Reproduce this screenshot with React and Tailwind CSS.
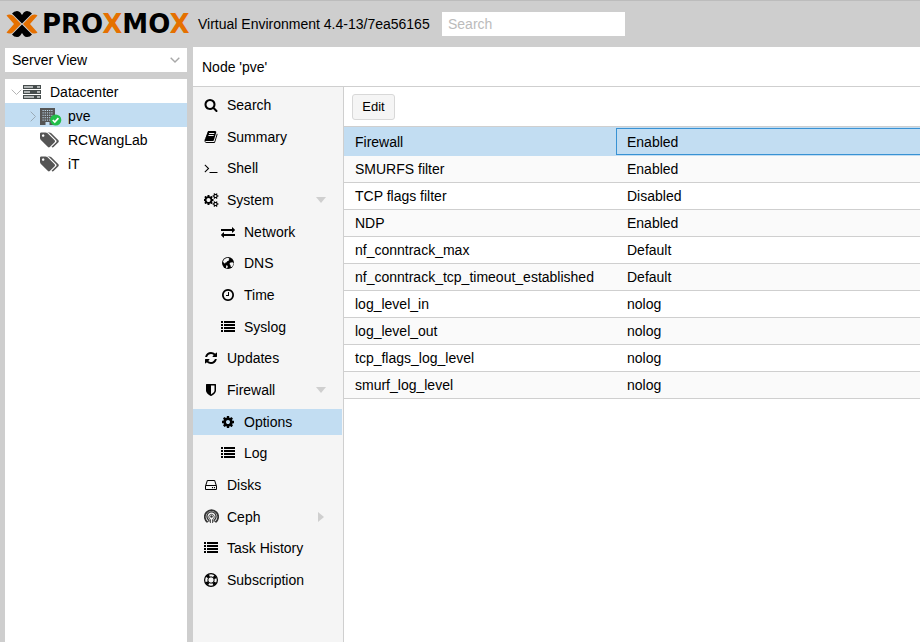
import React from "react";

const I = {
  search: ["0 0 1792 1792", "M1216 832q0-185-131.5-316.5t-316.5-131.5-316.5 131.5-131.5 316.5 131.5 316.5 316.5 131.5 316.5-131.5 131.5-316.5zm512 832q0 52-38 90t-90 38q-54 0-90-38l-343-342q-179 124-399 124-143 0-273.5-55.5t-225-150-150-225-55.5-273.5 55.5-273.5 150-225 225-150 273.5-55.5 273.5 55.5 225 150 150 225 55.5 273.5q0 220-124 399l343 343q37 37 37 90z"],
  book: ["0 0 1792 1792", "M1703 478q40 57 18 129l-275 906q-19 64-76.5 107.5t-122.5 43.5h-923q-77 0-148.5-53.5t-99.5-131.5q-24-67-2-127 0-4 3-27t4-37q1-8-3-21.5t-3-19.5q2-11 8-21t16.5-23.5 16.5-23.5q23-38 45-91.5t30-91.5q3-10 .5-30t-.5-28q3-11 17-28t17-23q21-36 42-92t25-90q1-9-2.5-32t.5-28q4-13 22-30.5t22-22.5q19-26 42.5-84.5t27.5-96.5q1-8-3-25.5t-2-26.5q2-8 9-18t18-23 17-21q8-12 16.5-30.5t15-35 16-36 19.5-32 26.5-23.5 36-11.5 47.5 5.5l-1 3q38-9 51-9h761q74 0 114 56t18 130l-274 906q-36 119-71.5 153.5t-128.5 34.5h-869q-27 0-38 15-11 16-1 43 24 70 144 70h923q29 0 56-15.5t35-41.5l300-987q7-22 5-57 38 15 59 43zm-1064 2q-4 13 2 22.5t20 9.5h608q13 0 25.5-9.5t16.5-22.5l21-64q4-13-2-22.5t-20-9.5h-608q-13 0-25.5 9.5t-16.5 22.5zm-83 256q-4 13 2 22.5t20 9.5h608q13 0 25.5-9.5t16.5-22.5l21-64q4-13-2-22.5t-20-9.5h-608q-13 0-25.5 9.5t-16.5 22.5z"],
  terminal: ["0 0 1792 1792", "M649 983l-466 466q-10 10-23 10t-23-10l-50-50q-10-10-10-23t10-23l393-393-393-393q-10-10-10-23t10-23l50-50q10-10 23-10t23 10l466 466q10 10 10 23t-10 23zm1079 457v64q0 14-9 23t-23 9h-960q-14 0-23-9t-9-23v-64q0-14 9-23t23-9h960q14 0 23 9t9 23z"],
  cogs: ["0 0 1920 1792", "M832 896q0-106-75-181t-181-75-181 75-75 181 75 181 181 75 181-75 75-181zm768 512q0-52-38-90t-90-38-90 38-38 90q0 53 37.5 90.5t90.5 37.5 90.5-37.5 37.5-90.5zm0-1024q0-52-38-90t-90-38-90 38-38 90q0 53 37.5 90.5t90.5 37.5 90.5-37.5 37.5-90.5zm-384 421v185q0 10-7 19.5t-16 10.5l-155 24q-11 35-32 76 34 48 90 115 7 11 7 20 0 12-7 19-23 30-82.5 89.5t-78.5 59.5q-11 0-21-7l-115-90q-37 19-77 31-11 108-23 155-7 24-30 24h-186q-11 0-20-7.5t-10-17.5l-23-153q-34-10-75-31l-118 89q-7 7-20 7-11 0-21-8-144-133-144-160 0-9 7-19 10-14 41-53t47-61q-23-44-35-82l-152-24q-10-1-17-9.5t-7-19.5v-185q0-10 7-19.5t16-10.5l155-24q11-35 32-76-34-48-90-115-7-11-7-20 0-12 7-20 22-30 82-89t79-59q11 0 21 7l115 90q34-18 77-32 11-108 23-154 7-24 30-24h186q11 0 20 7.5t10 17.5l23 153q34 10 75 31l118-89q8-7 20-7 11 0 21 8 144 133 144 160 0 8-7 19-12 16-42 54t-45 60q23 48 34 82l152 23q10 2 17 10.5t7 19.5zm640 533v140q0 16-149 31-12 27-30 52 51 113 51 138 0 4-4 7-122 71-124 71-8 0-46-47t-52-68q-20 2-30 2t-30-2q-14 21-52 68t-46 47q-2 0-124-71-4-3-4-7 0-25 51-138-18-25-30-52-149-15-149-31v-140q0-16 149-31 13-29 30-52-51-113-51-138 0-4 4-7 4-2 35-20t59-34 30-16q8 0 46 46.5t52 67.5q20-2 30-2t30 2q51-71 92-112l6-2q4 0 124 70 4 3 4 7 0 25-51 138 17 23 30 52 149 15 149 31zm0-1024v140q0 16-149 31-12 27-30 52 51 113 51 138 0 4-4 7-122 71-124 71-8 0-46-47t-52-68q-20 2-30 2t-30-2q-14 21-52 68t-46 47q-2 0-124-71-4-3-4-7 0-25 51-138-18-25-30-52-149-15-149-31v-140q0-16 149-31 13-29 30-52-51-113-51-138 0-4 4-7 4-2 35-20t59-34 30-16q8 0 46 46.5t52 67.5q20-2 30-2t30 2q51-71 92-112l6-2q4 0 124 70 4 3 4 7 0 25-51 138 17 23 30 52 149 15 149 31z"],
  exchange: ["0 0 1792 1792", "M1792 1184v192q0 13-9.5 22.5t-22.5 9.5h-1376v192q0 13-9.5 22.5t-22.5 9.5q-12 0-24-10l-319-320q-9-9-9-22 0-14 9-23l320-320q9-9 23-9 13 0 22.5 9.5t9.5 22.5v192h1376q13 0 22.5 9.5t9.5 22.5zm0-544q0 14-9 23l-320 320q-9 9-23 9-13 0-22.5-9.5t-9.5-22.5v-192h-1376q-13 0-22.5-9.5t-9.5-22.5v-192q0-13 9.5-22.5t22.5-9.5h1376v-192q0-14 9-23t23-9q12 0 24 10l319 319q9 9 9 23z"],
  clock: ["0 0 1792 1792", "M1024 544v448q0 14-9 23t-23 9h-320q-14 0-23-9t-9-23v-64q0-14 9-23t23-9h224v-352q0-14 9-23t23-9h64q14 0 23 9t9 23zm416 352q0-148-73-273t-198-198-273-73-273 73-198 198-73 273 73 273 198 198 273 73 273-73 198-198 73-273zm224 0q0 209-103 385.5t-279.5 279.5-385.5 103-385.5-103-279.5-279.5-103-385.5 103-385.5 279.5-279.5 385.5-103 385.5 103 279.5 279.5 103 385.5z"],
  list: ["0 0 14 14", "M0 1h2v2H0zM3 1h11v2H3zM0 4h2v2H0zM3 4h11v2H3zM0 7h2v2H0zM3 7h11v2H3zM0 10h2v2H0zM3 10h11v2H3z"],
  refresh: ["0 0 1792 1792", "M1639 1056q0 5-1 7-64 268-268 434.5t-478 166.5q-146 0-282.5-55t-243.5-157l-129 129q-19 19-45 19t-45-19-19-45v-448q0-26 19-45t45-19h448q26 0 45 19t19 45-19 45l-137 137q71 66 161 102t187 36q134 0 250-65t186-179q11-17 53-117 8-23 30-23h192q13 0 22.5 9.5t9.5 22.5zm25-800v448q0 26-19 45t-45 19h-448q-26 0-45-19t-19-45 19-45l138-138q-148-137-349-137-134 0-250 65t-186 179q-11 17-53 117-8 23-30 23h-199q-13 0-22.5-9.5t-9.5-22.5v-7q65-268 270-434.5t480-166.5q146 0 284 55.5t245 156.5l130-129q19-19 45-19t45 19 19 45z"],
  shield: ["0 0 1792 1792", "M1344 960v-640h-448v1137q119-63 213-137 235-184 235-360zm192-768v768q0 86-33.5 170.5t-83 150-118 127.5-126.5 103-121 77.5-89.5 49.5-42.5 20q-12 6-26 6t-26-6q-16-7-42.5-20t-89.5-49.5-121-77.5-126.5-103-118-127.5-83-150-33.5-170.5v-768q0-26 19-45t45-19h1152q26 0 45 19t19 45z"],
  gear: ["0 0 1792 1792", "M1152 896q0-106-75-181t-181-75-181 75-75 181 75 181 181 75 181-75 75-181zm512-109v222q0 12-8 23t-20 13l-185 28q-19 54-39 91 35 50 107 138 10 12 10 25t-9 23q-27 37-99 108t-94 71q-12 0-26-9l-138-108q-44 23-91 38-16 136-29 186-7 28-36 28h-222q-14 0-24.5-8.5t-11.5-21.5l-28-184q-49-16-90-37l-141 107q-10 9-25 9-14 0-25-11-126-114-165-168-7-10-7-23 0-12 8-23 15-21 51-66.5t54-70.5q-27-50-41-99l-183-27q-13-2-21-12.5t-8-23.5v-222q0-12 8-23t19-13l186-28q14-46 39-92-40-57-107-138-10-12-10-24 0-10 9-23 26-36 98.5-107.5t94.5-71.5q13 0 26 10l138 107q44-23 91-38 16-136 29-186 7-28 36-28h222q14 0 24.5 8.5t11.5 21.5l28 184q49 16 90 37l142-107q9-9 24-9 13 0 25 10 129 119 165 170 7 8 7 22 0 12-8 23-15 21-51 66.5t-54 70.5q26 50 41 98l183 28q13 2 21 12.5t8 23.5z"],
  disk: ["0 0 1792 1792", "M1168 1216q0 33-23.5 56.5t-56.5 23.5-56.5-23.5-23.5-56.5 23.5-56.5 56.5-23.5 56.5 23.5 23.5 56.5zm256 0q0 33-23.5 56.5t-56.5 23.5-56.5-23.5-23.5-56.5 23.5-56.5 56.5-23.5 56.5 23.5 23.5 56.5zm112 160v-320q0-13-9.5-22.5t-22.5-9.5h-1216q-13 0-22.5 9.5t-9.5 22.5v320q0 13 9.5 22.5t22.5 9.5h1216q13 0 22.5-9.5t9.5-22.5zm-1230-480h1180l-157-482q-4-13-16-21.5t-26-8.5h-782q-14 0-26 8.5t-16 21.5zm1358 160v320q0 66-47 113t-113 47h-1216q-66 0-113-47t-47-113v-320q0-25 16-75l197-606q17-53 63-86t101-33h782q55 0 101 33t63 86l197 606q16 50 16 75z"],
  tags: ["0 0 1920 1792", "M448 448q0-53-37.5-90.5t-90.5-37.5-90.5 37.5-37.5 90.5 37.5 90.5 90.5 37.5 90.5-37.5 37.5-90.5zm1067 576q0 53-37 90l-491 492q-39 37-91 37-53 0-90-37l-715-716q-38-37-64.5-101t-26.5-117v-416q0-52 38-90t90-38h416q53 0 117 26.5t102 64.5l715 714q37 39 37 91zm384 0q0 53-37 90l-491 492q-39 37-91 37-36 0-59-14t-53-45l470-470q37-37 37-90 0-52-37-91l-715-714q-38-38-102-64.5t-117-26.5h224q53 0 117 26.5t102 64.5l715 714q37 39 37 91z"],
};

function Icon({ name, className = "h-[14px] w-[14px]" }) {
  if (name === "globe")
    return (
      <svg viewBox="0 0 14 14" className={className} aria-hidden="true">
        <circle cx="7" cy="7" r="6" fill="#000" />
        <path d="M6.500 1.800l2 .4-1 .9.9.6-.9 1-1.300.5-.9 1.200-1.300.3.300.9-1.200-.4L2 5.400l1-1.900 1.500-1.100zM9 6.700l2.200-.5 1.500.8-.5 2-1.300 1.900-1.200-.2-.3-1.800-.9-1zM5.200 9.200l1.400.6.2 1.200-.8 1.300-1-.5z" fill="#f5f5f5" />
      </svg>
    );
  if (name === "ring")
    return (
      <svg viewBox="0 0 14 14" className={className} fill="none" stroke="#000" aria-hidden="true">
        <circle cx="7" cy="7" r="6.4" strokeWidth="1.2" />
        <circle cx="7" cy="7" r="3.2" strokeWidth="1" />
        <circle cx="7" cy="7" r="4.7" strokeWidth="2.8" strokeDasharray="3 4.383" strokeDashoffset="-2.19" />
      </svg>
    );
  if (name === "ceph")
    return (
      <svg viewBox="0 0 15 15" className="h-[15px] w-[15px]" fill="none" stroke="#333" aria-hidden="true">
        <path d="M3.600 13.300a6.700 6.700 0 1 1 7.800 0" strokeWidth="1.800" />
        <path d="M4.900 12.800v-1.600a4.600 4.600 0 1 1 5.200 0v1.600" strokeWidth="1.300" />
        <path d="M6.400 14v-3.500a2.700 2.700 0 1 1 2.200 0V14" strokeWidth=".9" />
        <circle cx="7.500" cy="7.500" r="1.200" fill="#333" stroke="none" />
      </svg>
    );
  const [box, d] = I[name];
  return (
    <svg viewBox={box} className={className} fill="currentColor" aria-hidden="true">
      <path d={d} />
    </svg>
  );
}

const nav = [
  ["Search", "search"],
  ["Summary", "book"],
  ["Shell", "terminal"],
  ["System", "cogs", 0, "down"],
  ["Network", "exchange", 1],
  ["DNS", "globe", 1],
  ["Time", "clock", 1],
  ["Syslog", "list", 1],
  ["Updates", "refresh"],
  ["Firewall", "shield", 0, "down"],
  ["Options", "gear", 1],
  ["Log", "list", 1],
  ["Disks", "disk"],
  ["Ceph", "ceph", 0, "right"],
  ["Task History", "list"],
  ["Subscription", "ring"],
];

const rows = [
  ["Firewall", "Enabled"],
  ["SMURFS filter", "Enabled"],
  ["TCP flags filter", "Disabled"],
  ["NDP", "Enabled"],
  ["nf_conntrack_max", "Default"],
  ["nf_conntrack_tcp_timeout_established", "Default"],
  ["log_level_in", "nolog"],
  ["log_level_out", "nolog"],
  ["tcp_flags_log_level", "nolog"],
  ["smurf_log_level", "nolog"],
];

function Logo() {
  return (
    <div className="flex w-[184px] shrink-0 items-center gap-1" aria-label="Proxmox">
      <svg viewBox="0 0 32 28" className="h-7 w-8 shrink-0" aria-hidden="true">
        <path d="M6 3.500Q8 1 11 1q2 0 3.300 1.500L16 5l1.700-2.500Q19 1 21 1q3 0 5 2.500L16 13.500zM6 24.500Q8 27 11 27q2 0 3.300-1.500L16 23l1.700 2.500Q19 27 21 27q3 0 5-2.500L16 14.500z" fill="#000" />
        <path d="M.5 5.500Q1.500 4.500 3.800 4.500 6 4.500 7.300 6L15 14 7.300 22Q6 23.500 3.800 23.500 1.500 23.500.5 22.500L8 14zM31.500 5.500Q30.500 4.500 28.200 4.500 26 4.500 24.700 6L17 14l7.700 8Q26 23.500 28.200 23.500 30.500 23.500 31.500 22.500L24 14z" fill="#e57000" />
      </svg>
      <span className="font-['DejaVu_Sans',sans-serif] text-[26px] leading-7 font-bold text-black">
        PRO<span className="text-[#e57000]">X</span>MO<span className="text-[#e57000]">X</span>
      </span>
    </div>
  );
}

function TreeRow({ children, selected, className }) {
  return (
    <li className={`flex h-6 items-center pt-[2px] ${selected ? "bg-[#c2ddf2]" : ""} ${className}`}>
      {children}
    </li>
  );
}

export default function App() {
  return (
    <div className="flex min-h-screen flex-col bg-[#cecece] font-['Liberation_Sans',Arial,sans-serif] text-sm leading-5 text-black">
      <header className="flex h-[47px] items-center border-t border-[#bcbcbc] pl-[6px]">
        <Logo />
        <span className="ml-2 w-[237px] shrink-0 whitespace-nowrap">Virtual Environment 4.4-13/7ea56165</span>
        <input
          type="text"
          aria-label="Search"
          placeholder="Search"
          className="ml-[7px] h-6 w-[183px] bg-white px-[6px] outline-none placeholder:text-[#bbbbbb]"
        />
      </header>
      <div className="flex grow">
        <aside className="flex w-[193px] shrink-0 flex-col gap-[7px] pt-px pr-[6px] pl-[5px]">
          <div className="relative">
            <select aria-label="View" className="block h-6 w-full appearance-none bg-white px-[7px] outline-none">
              <option>Server View</option>
            </select>
            <svg viewBox="0 0 10 6" className="pointer-events-none absolute top-[9px] right-[7px] h-[6px] w-[10px]" fill="none" stroke="#a8a8a8" strokeWidth="1.400" aria-hidden="true">
              <path d="M.7.7L5 5 9.300.7" />
            </svg>
          </div>
          <ul className="grow bg-white">
            <TreeRow className="pl-[6px]">
              <svg viewBox="0 0 11 7" className="h-[7px] w-[11px]" fill="none" stroke="#b5b5b5" aria-hidden="true">
                <path d="M.7.7l4.800 4.800L10.300.7" />
              </svg>
              <svg viewBox="0 0 18 14" className="ml-px h-[14px] w-[18px]" aria-hidden="true">
                <path d="M0 0h18v4H0zM0 5h18v4H0zM0 10h18v4H0z" fill="#464d4d" />
                <path d="M1 1.300h9v1.400H1zM1 6.300h6v1.400H1zM1 11.300h10v1.400H1zM14 1.300h3v1.400h-3zM14 6.300h3v1.400h-3zM14 11.300h3v1.400h-3z" fill="#d5d8d8" />
              </svg>
              <span className="ml-[9px]">Datacenter</span>
            </TreeRow>
            <TreeRow selected className="pl-[25px]">
              <svg viewBox="0 0 7 11" className="h-[11px] w-[7px]" fill="none" stroke="#9aaab6" aria-hidden="true">
                <path d="M.7.7l4.800 4.800-4.800 4.800" />
              </svg>
              <svg viewBox="0 0 22 19" className="ml-[3px] h-[19px] w-[22px]" aria-hidden="true">
                <path d="M0 1h15v17H0z" fill="#555" />
                <path d="M2.500 3.500h10M2.500 5.900h10M2.500 8.300h10M2.500 10.700h10M2.500 13.100h10" stroke="#c2ddf2" strokeWidth="1" strokeDasharray="1.200 1" />
                <path d="M5.500 15h4v3h-4z" fill="#c2ddf2" />
                <circle cx="15.700" cy="13" r="5.600" fill="#21bf4b" />
                <path d="M12.800 13l2 2 3.600-3.800" fill="none" stroke="#fff" strokeWidth="1.700" />
              </svg>
              <span className="ml-[6px]">pve</span>
            </TreeRow>
            <TreeRow className="pl-[35px] text-[#555]">
              <Icon name="tags" className="h-[18px] w-[19px]" />
              <span className="ml-[9px] text-black">RCWangLab</span>
            </TreeRow>
            <TreeRow className="pl-[35px] text-[#555]">
              <Icon name="tags" className="h-[18px] w-[19px]" />
              <span className="ml-[9px] text-black">iT</span>
            </TreeRow>
          </ul>
        </aside>
        <main className="flex min-w-0 grow flex-col bg-white">
          <h1 className="h-10 border-b border-[#cfcfcf] px-[9px] py-[10px]">Node 'pve'</h1>
          <div className="flex grow">
            <nav className="w-[151px] shrink-0 border-r border-[#cfcfcf] bg-[#f5f5f5] pt-[2px] pr-px">
              <ul className="grid h-[507px] grid-rows-[repeat(16,minmax(0,1fr))]">
                {nav.map(([label, icon, level, arrow]) => (
                  <li key={label} className="flex items-center">
                    <a
                      href="#"
                      className={`flex h-[26px] w-full items-center ${level ? "pl-[27px]" : "pl-[10px]"} ${label === "Options" ? "bg-[#c2ddf2]" : ""}`}
                    >
                      <span className="flex w-4 shrink-0 justify-center">
                        <Icon name={icon} className={icon === "cogs" ? "h-[14px] w-[15px]" : "h-[14px] w-[14px]"} />
                      </span>
                      <span className="ml-2 grow">{label}</span>
                      {arrow === "down" && (
                        <svg viewBox="0 0 10 6" className="mr-4 h-[6px] w-[10px]" fill="#cfcfcf" aria-hidden="true"><path d="M0 0h10L5 6z" /></svg>
                      )}
                      {arrow === "right" && (
                        <svg viewBox="0 0 6 10" className="mr-[18px] h-[10px] w-[6px]" fill="#cfcfcf" aria-hidden="true"><path d="M0 0v10l6-5z" /></svg>
                      )}
                    </a>
                  </li>
                ))}
              </ul>
            </nav>
            <section className="min-w-0 grow">
              <div className="flex h-10 items-center border-b border-[#cfcfcf] pl-2">
                <button type="button" className="h-[26px] w-[43px] rounded-[3px] border border-[#d8d8d8] bg-[#f5f5f5] text-[13px] leading-4">Edit</button>
              </div>
              <table className="w-full table-fixed border-separate border-spacing-0 text-left">
                <colgroup>
                  <col className="w-[272px]" />
                  <col />
                </colgroup>
                <tbody>
                  {rows.map(([k, v], i) => (
                    <tr key={k} className={i === 0 ? "bg-[#c2ddf2]" : i % 2 ? "bg-[#fafafa]" : "bg-white"}>
                      <th scope="row" className={i === 0 ? "h-[29px] px-[11px] font-normal" : "h-[27px] border-b border-[#cfcfcf] px-[11px] font-normal"}>{k}</th>
                      {i === 0 ? (
                        <td className="h-[29px] p-0">
                          <div className="flex h-[27px] items-center border border-r-0 border-[#3892d4] px-[10px]">{v}</div>
                        </td>
                      ) : (
                        <td className="h-[27px] border-b border-[#cfcfcf] px-[11px]">{v}</td>
                      )}
                    </tr>
                  ))}
                </tbody>
              </table>
            </section>
          </div>
        </main>
      </div>
    </div>
  );
}
